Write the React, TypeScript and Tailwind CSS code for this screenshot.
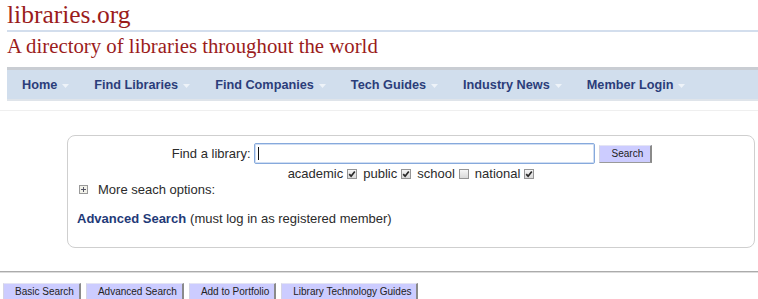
import React from "react";

const Arrow = () => (
  <svg width="7" height="4" viewBox="0 0 7 4" className="ml-[5px] mr-[25px] mt-[1px] shrink-0">
    <path d="M0 0H7L3.5 4Z" fill="#eef3f9" />
  </svg>
);

const Check = ({ checked, last }: { checked: boolean; last?: boolean }) => (
  <span
    className={
      last
        ? "ml-[4px] inline-flex h-[10px] w-[10px] items-center justify-center border border-[#959595] bg-linear-to-b from-[#f6f6f6] to-[#d9d9d9]"
        : "ml-[4px] mr-[6px] inline-flex h-[10px] w-[10px] items-center justify-center border border-[#959595] bg-linear-to-b from-[#f6f6f6] to-[#d9d9d9]"
    }
  >
    {checked && (
      <svg width="8" height="8" viewBox="0 0 8 8">
        <path d="M1.2 4.2L3.1 6.2L6.8 1.4" stroke="#2a2a2a" strokeWidth="1.7" fill="none" />
      </svg>
    )}
  </span>
);

const NavItem = ({ label }: { label: string }) => (
  <div className="flex items-center">
    <span>{label}</span>
    <Arrow />
  </div>
);

const Btn = ({ label }: { label: string }) => (
  <div className="flex h-[18px] shrink-0 items-center border-t border-l border-t-[#e4e4f4] border-l-[#d4d4e4] border-r-2 border-b border-r-[#8a8a8a] border-b-[#9a9a9a] bg-[#ccccff] pl-[11px] pr-[5px] text-[10px] leading-none text-[#222]">
    {label}
  </div>
);

export default function App() {
  return (
    <div className="relative h-[299px] w-[758px] overflow-hidden bg-white font-['Liberation_Sans',Arial,sans-serif] text-[#2b2b2b]">
      {/* Title */}
      <div className="h-[30px] pl-[7px] pt-[1px] font-['Liberation_Serif','Times_New_Roman',serif] text-[25.5px] leading-[28px] text-[#9b1c1c]">
        libraries.org
      </div>
      <div className="ml-[7px] h-[2px] bg-[#d3deed]" />
      <div className="mb-[9px] h-[26px] pl-[7px] pt-[2px] font-['Liberation_Serif','Times_New_Roman',serif] text-[20.8px] leading-[24px] text-[#9b1c1c]">
        A directory of libraries throughout the world
      </div>

      {/* Nav */}
      <div className="ml-[7px] flex h-[34px] items-center border-t-[3px] border-b-2 border-t-[#c9cdd3] border-b-[#dfe4ea] bg-[#d1deed] pl-[15px] pt-[2px] text-[12.7px] font-bold text-[#2b3d7a]">
        <NavItem label="Home" />
        <NavItem label="Find Libraries" />
        <NavItem label="Find Companies" />
        <NavItem label="Tech Guides" />
        <NavItem label="Industry News" />
        <NavItem label="Member Login" />
      </div>

      <div className="mt-[9px] h-px bg-[#efefef]" />

      {/* Search box */}
      <div className="ml-[67px] mt-[24px] box-border h-[113px] w-[688px] rounded-[8px] border border-[#cfcfcf] pt-[7px] text-[13px]">
        <div className="ml-[2px] flex h-[21px] items-center justify-center">
          <span className="mr-[3px]">Find a library:</span>
          <div className="relative box-border h-[21px] w-[341px] rounded-[2px] border border-[#86a9dc] shadow-[inset_0_0_0_1px_#d0def3]">
            <span className="absolute left-[3px] top-[3px] h-[13px] w-px bg-[#111]" />
          </div>
          <div className="ml-[4px] flex h-[18px] items-center border-t border-l border-t-[#e4e4f4] border-l-[#d4d4e4] border-r-2 border-b border-r-[#8a8a8a] border-b-[#9a9a9a] bg-[#ccccff] pl-[12px] pr-[7px] text-[10px] leading-none text-[#222]">
            Search
          </div>
        </div>
        <div className="mt-[2px] flex h-[15px] items-center justify-center leading-none">
          <span>academic</span>
          <Check checked />
          <span>public</span>
          <Check checked />
          <span>school</span>
          <Check checked={false} />
          <span>national</span>
          <Check checked last />
        </div>
        <div className="mt-[1px] flex h-[15px] items-center pl-[9px] leading-none">
          <span className="ml-[2px] flex h-[9px] w-[9px] items-center justify-center border border-[#9a9a9a] bg-[#f2f2ea]">
            <svg width="5" height="5" viewBox="0 0 5 5">
              <path d="M2.5 0V5M0 2.5H5" stroke="#556" strokeWidth="1" />
            </svg>
          </span>
          <span className="ml-[10px]">More seach options:</span>
        </div>
        <div className="mt-[14px] flex h-[15px] items-center pl-[9px] leading-none">
          <span className="font-bold text-[#1f3a78]">Advanced Search</span>
          <span className="ml-[4px]">(must log in as registered member)</span>
        </div>
      </div>

      {/* HR */}
      <div className="mt-[23px] h-px bg-[#ababab]" />
      <div className="h-px bg-[#dcdcdc]" />

      {/* Bottom buttons */}
      <div className="ml-[3px] mt-[10px] flex gap-[5px]">
        <Btn label="Basic Search" />
        <Btn label="Advanced Search" />
        <Btn label="Add to Portfolio" />
        <Btn label="Library Technology Guides" />
      </div>
    </div>
  );
}
